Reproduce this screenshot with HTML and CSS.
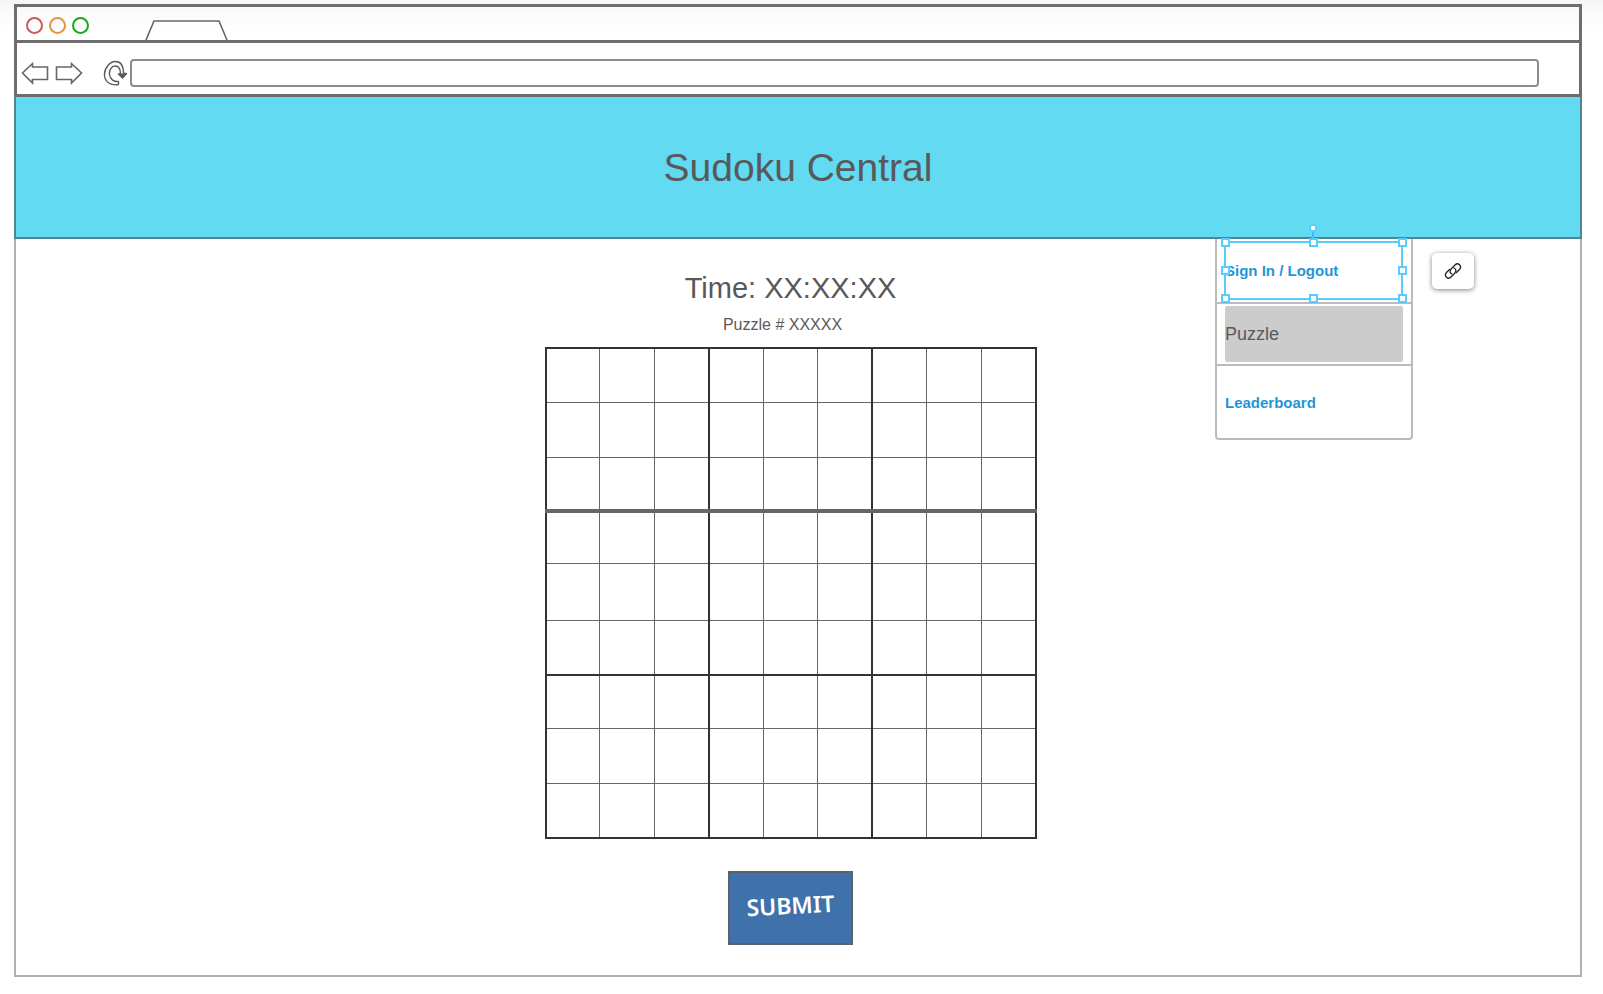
FILE: index.html
```html
<!DOCTYPE html>
<html lang="en">
<head>
<meta charset="utf-8">
<title>Sudoku Central</title>
<link rel="stylesheet" href="styles.css">
</head>
<body>
<div class="chrome">
  <div class="titlebar">
    <div class="lights">
      <span class="light light-red"></span>
      <span class="light light-orange"></span>
      <span class="light light-green"></span>
    </div>
    <svg class="tab" width="84" height="20" viewBox="0 0 84 20" fill="none" stroke="#666" stroke-width="1.6"><path d="M1 20 9 1H74L82 20"/></svg>
  </div>
  <div class="toolbar">
    <button class="tool" aria-label="Back"><svg width="28" height="24" viewBox="0 0 28 24" fill="none" stroke="#666" stroke-width="1.6"><path d="M1.500 12 11.500 2.500V6H26.500V18.500H11.500V22Z"/></svg></button>
    <button class="tool tool-forward" aria-label="Forward"><svg width="28" height="24" viewBox="0 0 28 24" fill="none" stroke="#666" stroke-width="1.6"><path d="M26.500 12 16.500 2.500V6H1.500V18.500H16.500V22Z"/></svg></button>
    <button class="tool" aria-label="Reload"><svg width="25" height="26" viewBox="0 0 25 26" fill="none" stroke="#5a5a5a" stroke-width="1.4" stroke-linejoin="round"><path d="M15.500 21.500V24.500C8 26 2 22 1.500 15.500C1 8 7 1.500 12.500 1.500C17.500 1.500 20.500 6 20.500 13.500H23.500L19.500 18 15.500 14H17.500C17.500 9 15.500 6 12 6C8.500 6 6 10 6.500 14.500C7 19 10.500 22 15.500 21.500Z"/><path d="M16.500 14.300H22.500L19.500 17.500Z" fill="#5a5a5a"/></svg></button>
    <input class="address" type="text" aria-label="Address">
  </div>
</div>
<header class="banner"><h1>Sudoku Central</h1></header>
<main class="page">
  <section class="game">
    <h2 class="time">Time: XX:XX:XX</h2>
    <p class="puzzle-id">Puzzle # XXXXX</p>
    <table class="board" aria-label="Sudoku board">
      <tr><td></td><td></td><td></td><td></td><td></td><td></td><td></td><td></td><td></td></tr>
      <tr><td></td><td></td><td></td><td></td><td></td><td></td><td></td><td></td><td></td></tr>
      <tr><td></td><td></td><td></td><td></td><td></td><td></td><td></td><td></td><td></td></tr>
      <tr><td></td><td></td><td></td><td></td><td></td><td></td><td></td><td></td><td></td></tr>
      <tr><td></td><td></td><td></td><td></td><td></td><td></td><td></td><td></td><td></td></tr>
      <tr><td></td><td></td><td></td><td></td><td></td><td></td><td></td><td></td><td></td></tr>
      <tr><td></td><td></td><td></td><td></td><td></td><td></td><td></td><td></td><td></td></tr>
      <tr><td></td><td></td><td></td><td></td><td></td><td></td><td></td><td></td><td></td></tr>
      <tr><td></td><td></td><td></td><td></td><td></td><td></td><td></td><td></td><td></td></tr>
    </table>
    <button class="submit"><span class="submit-label">SUBMIT</span></button>
  </section>
  <nav class="menu">
    <div class="menu-row row-sign"><a href="#sign-in">Sign In / Logout</a></div>
    <div class="menu-row row-puzzle"><a class="current" href="#puzzle">Puzzle</a></div>
    <div class="menu-row row-leaders"><a href="#leaderboard">Leaderboard</a></div>
    <svg class="selection" width="188" height="80" viewBox="0 0 188 80" fill="none" stroke="#5acbfa" stroke-width="2">
      <path d="M6 19H183V76H6Z"/>
      <path d="M94 8V16" stroke="#38bdf5"/>
      <circle cx="94" cy="5" r="3" fill="#fff" stroke-width="1.5"/>
      <g fill="#fff">
        <path d="M3 16h7v7H3ZM91 16h7v7h-7ZM180 16h7v7h-7Z"/>
        <path d="M3 44h7v7H3ZM180 44h7v7h-7Z"/>
        <path d="M3 72h7v7H3ZM91 72h7v7h-7ZM180 72h7v7h-7Z"/>
      </g>
    </svg>
    <button class="link-button" aria-label="Add link"><svg width="18" height="18" viewBox="0 0 18 18" fill="none" stroke="#222" stroke-width="1.3" stroke-linecap="round"><path d="M8 12C5.500 11 5.500 8.500 7.500 6.500L11 3C14 0 18.500 4 15.500 7.500L12.500 10.500"/><path d="M10 6C12.500 7 12.500 9.500 10.500 11.500L7 15C4 18-.5 14 2.500 10.500L5.500 7.500"/></svg></button>
  </nav>
</main>
</body>
</html>
```
FILE: styles.css
```css
* {
  box-sizing: border-box;
}

body {
  margin: 0;
  min-height: 100vh;
  padding: 4px 21px 17px 14px;
  display: flex;
  flex-direction: column;
  background: #fff linear-gradient(#f6f6f6, #fff) no-repeat 0 0 / 100% 30px;
  color: #595959;
  font-family: "Liberation Sans", Arial, sans-serif;
}

h1, h2, p {
  margin: 0;
  font-weight: 400;
}

button {
  padding: 0;
  border: 0;
  background: none;
  font: inherit;
}

svg {
  display: block;
}

.chrome {
  border: 3px solid #6e6e6e;
}

.titlebar {
  display: flex;
  align-items: center;
  height: 36px;
  padding-left: 9px;
  border-bottom: 3px solid #6e6e6e;
}

.lights {
  display: flex;
  gap: 6px;
  padding-top: 4px;
}

.light {
  width: 17px;
  height: 17px;
  border: 2px solid;
  border-radius: 50%;
}

.light-red { color: #c9595c; }
.light-orange { color: #e5953a; }
.light-green { color: #18a61f; }

.tab {
  align-self: flex-end;
  margin-left: 56px;
}

.toolbar {
  display: flex;
  align-items: center;
  height: 51px;
  padding: 8px 40px 0 4px;
}

.tool-forward {
  margin: 0 20px 0 6px;
}

.address {
  flex: 1;
  min-width: 0;
  height: 28px;
  margin-left: 2px;
  border: 2px solid #8c8c8c;
  border-radius: 4px;
  background: #fff;
}

.banner {
  display: flex;
  align-items: center;
  justify-content: center;
  height: 142px;
  border: 2px solid #4f8590;
  border-top: 0;
  background: #62daf2;
}

.banner h1 {
  padding-top: 2px;
  font-size: 39px;
  line-height: 44px;
}

.page {
  flex: 1;
  display: grid;
  grid-template-columns: 1fr auto 1fr;
  align-items: start;
  padding-right: 15px;
  border: 2px solid #b0b0b0;
  border-top: 0;
}

.game {
  grid-column: 2;
  display: flex;
  flex-direction: column;
  align-items: center;
  padding-top: 32px;
}

.time {
  font-size: 29px;
  line-height: 34px;
}

.puzzle-id {
  margin-top: 10px;
  padding-right: 16px;
  font-size: 16px;
  line-height: 20px;
}

.board {
  width: 492px;
  height: 492px;
  margin: 12px 0 32px;
  border-collapse: collapse;
  table-layout: fixed;
  border: 2px solid #333;
}

.board td {
  padding: 0;
  border: 1px solid #666;
}

.board td:nth-child(3n) {
  border-right: 2px solid #333;
}

.board tr:nth-child(1) td {
  border-top: 2px solid #333;
}

.board td:nth-child(1) {
  border-left: 2px solid #333;
}

.board tr:nth-child(3) td {
  border-bottom: 4px solid #666;
}

.board tr:nth-child(6) td,
.board tr:nth-child(9) td {
  border-bottom: 2px solid #333;
}

.board tr { height: 54px; }
.board tr:nth-child(2),
.board tr:nth-child(8) { height: 55px; }
.board tr:nth-child(4) { height: 52px; }
.board tr:nth-child(5) { height: 57px; }

.submit {
  width: 125px;
  height: 74px;
  border: 2px solid #59636e;
  background: #3f72aa;
  color: #fff;
}

.submit-label {
  display: block;
  padding-bottom: 6px;
  font-family: "Noto Sans", sans-serif;
  font-size: 23px;
  line-height: 30px;
  font-weight: 600;
  transform: rotate(-3deg);
}

.menu {
  position: relative;
  justify-self: end;
  width: 198px;
  margin-right: 152px;
  border: 2px solid #bbb;
  border-top: 0;
  border-radius: 0 0 4px 4px;
}

.menu-row {
  display: flex;
  padding: 2px 8px;
  border-bottom: 2px solid #bbb;
}

.menu-row:nth-child(3) {
  border-bottom: 0;
}

.row-sign { height: 65px; }
.row-puzzle { height: 62px; }
.row-leaders { height: 72px; }

.menu-row a {
  flex: 1;
  display: flex;
  align-items: center;
  color: #1e96d6;
  font-size: 15px;
  font-weight: 700;
  text-decoration: none;
}

.menu-row .current {
  border-radius: 2px;
  background: #ccc;
  color: #595959;
  font-size: 18px;
  font-weight: 400;
}

.selection {
  position: absolute;
  top: -16px;
  left: 2px;
}

.link-button {
  position: absolute;
  top: 14px;
  left: 215px;
  display: grid;
  place-items: center;
  width: 42px;
  height: 36px;
  border-radius: 5px;
  background: #fff;
  box-shadow: 0 1px 5px rgba(0, 0, 0, .5);
}
```
